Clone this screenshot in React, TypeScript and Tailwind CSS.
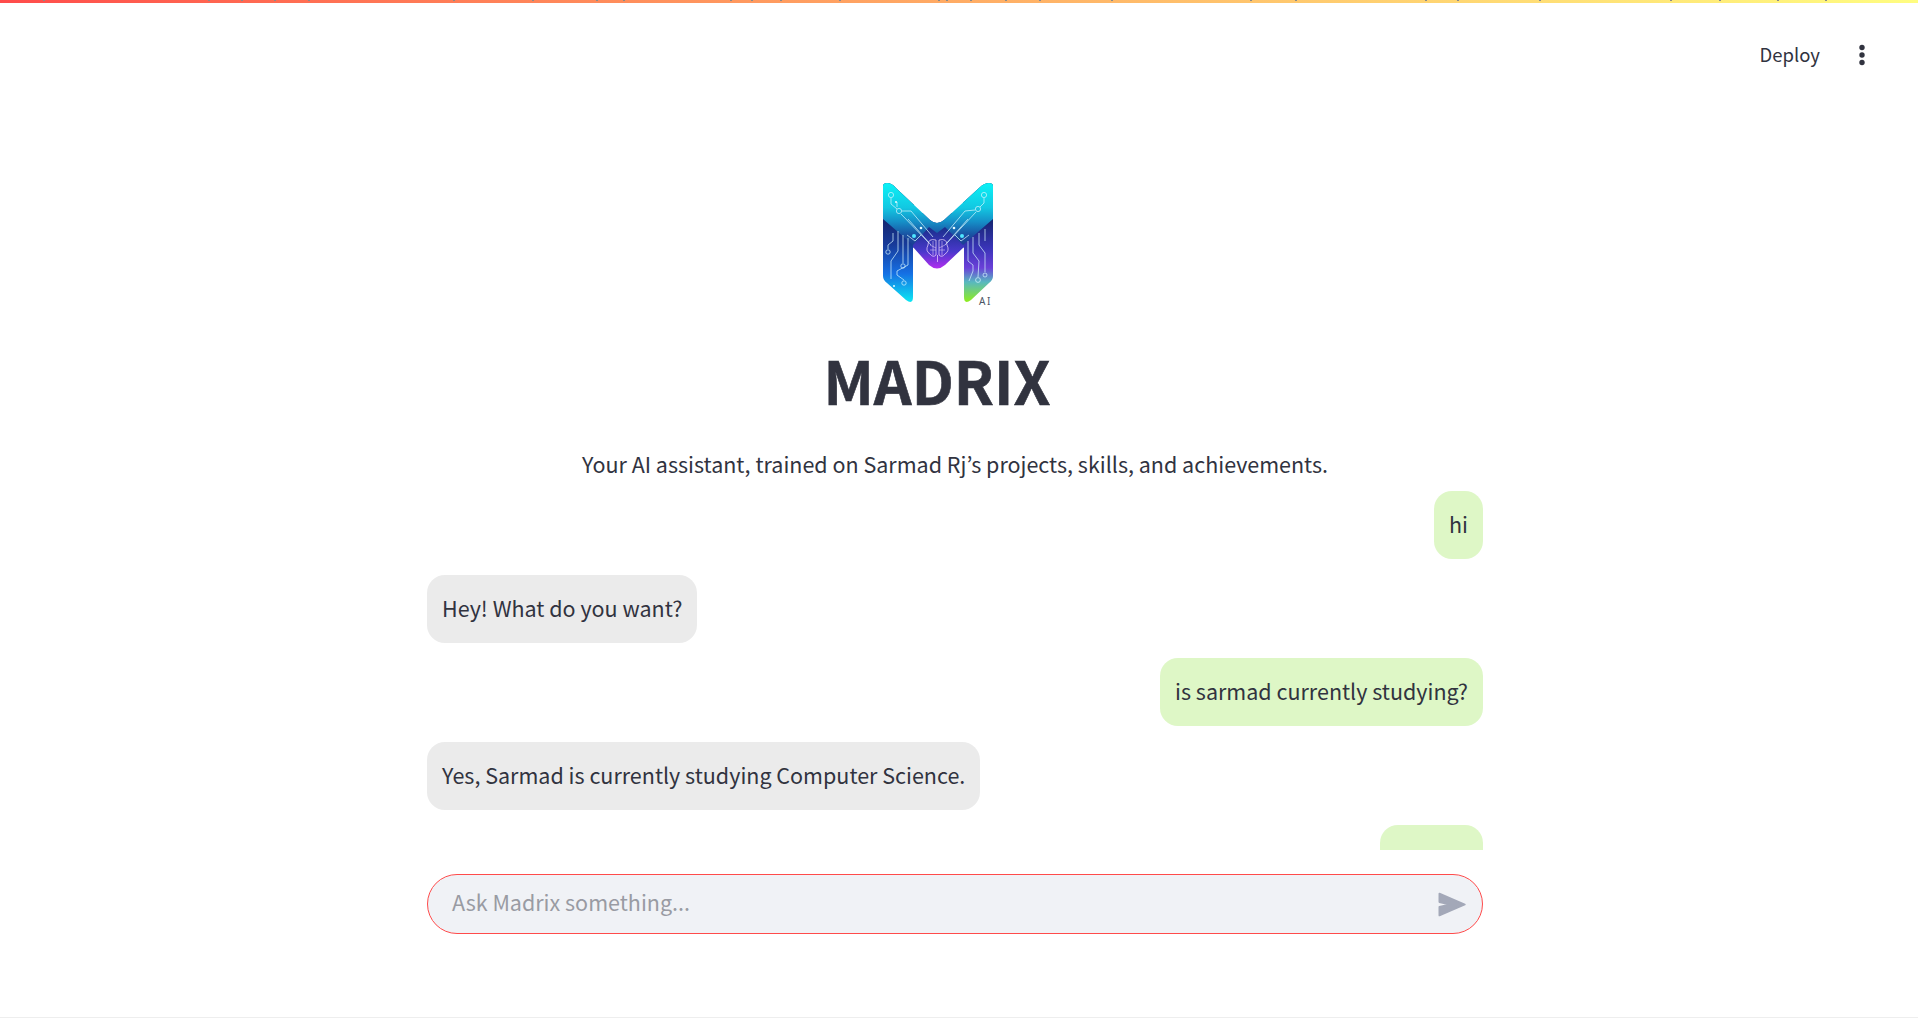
const fontStack = '[font-family:"Noto_Sans_CJK_JP","Noto_Sans",sans-serif]';

// small tick marks along the top row of the decoration bar
const barTicks = [43, 208, 241, 274, 308, 453, 532, 596, 623, 730, 751, 780, 839, 938, 946, 970, 1005, 1039, 1111, 1250, 1295, 1425, 1457, 1539, 1670, 1719, 1777, 1825];

const mShape =
  "M0 3 Q0 0 4 0 Q9 0 13 5 L47 37 Q54 43 61 37 L96 5 Q101 0 106 0 Q110 0 110 3 L110 93 Q110 97 106 100 L88 117 Q81 122 81 114 L81 64 L62 82 Q54 89 46 82 L30 64 L30 114 Q30 122 23 117 L4 100 Q0 97 0 93 Z";

function Logo() {
  return (
    <svg width="112" height="124" viewBox="0 0 112 124" fill="none">
      <defs>
        <clipPath id="mClip">
          <path d={mShape} />
        </clipPath>
        <linearGradient id="topBand" x1="0" y1="0" x2="0" y2="70" gradientUnits="userSpaceOnUse">
          <stop offset="0" stopColor="#0cf2f6" />
          <stop offset="0.35" stopColor="#12c8e2" />
          <stop offset="0.55" stopColor="#1590c8" />
          <stop offset="0.75" stopColor="#1a4fa0" />
          <stop offset="1" stopColor="#1c2f8a" />
        </linearGradient>
        <linearGradient id="leftLeg" x1="0" y1="36" x2="0" y2="120" gradientUnits="userSpaceOnUse">
          <stop offset="0" stopColor="#14266f" />
          <stop offset="0.3" stopColor="#173a99" />
          <stop offset="0.65" stopColor="#1570e4" />
          <stop offset="1" stopColor="#0cecf4" />
        </linearGradient>
        <linearGradient id="rightLeg" x1="0" y1="36" x2="0" y2="120" gradientUnits="userSpaceOnUse">
          <stop offset="0" stopColor="#14266f" />
          <stop offset="0.35" stopColor="#3a34b8" />
          <stop offset="0.58" stopColor="#6a3fd8" />
          <stop offset="0.75" stopColor="#58b8c0" />
          <stop offset="1" stopColor="#92f014" />
        </linearGradient>
        <linearGradient id="middle" x1="0" y1="45" x2="0" y2="88" gradientUnits="userSpaceOnUse">
          <stop offset="0" stopColor="#1a2f8c" />
          <stop offset="0.55" stopColor="#4a38cc" />
          <stop offset="1" stopColor="#c02cf4" />
        </linearGradient>
      </defs>
      <g clipPath="url(#mClip)">
        <rect x="0" y="0" width="31" height="124" fill="url(#leftLeg)" />
        <rect x="80" y="0" width="31" height="124" fill="url(#rightLeg)" />
        <rect x="30" y="30" width="51" height="60" fill="url(#middle)" />
        <path d="M0 0 L110 0 L110 36 L80 62 L62 44 L54 50 L46 44 L30 62 L0 36 Z" fill="url(#topBand)" />
      </g>
      <g stroke="#d6f6ff" strokeWidth="0.8" fill="none" opacity="0.9">
        <circle cx="8" cy="12" r="2.6" />
        <circle cx="101" cy="12" r="2.6" />
        <circle cx="16" cy="28" r="2.6" />
        <circle cx="95" cy="26" r="2.6" />
        <path d="M8 15 L8 21 L14 26" />
        <path d="M101 15 L101 20 L97 24" />
        <path d="M19 28 L28 28 L50 54" />
        <path d="M92 27 L82 28 L60 54" />
        <path d="M14 19 L14 24 M18 31 L46 60" />
        <path d="M93 29 L64 60" />
        <path d="M25 36 L48 62 M85 36 L62 62" />
        <path d="M24 52 L32 58 L38 52 M86 52 L78 58 L72 52" />
        <path d="M10 50 L10 58 L5 62 L5 66" />
        <circle cx="5" cy="69" r="2.2" />
        <path d="M15 48 L15 68 L8 78 L8 96" />
        <path d="M20 52 L20 80" />
        <circle cx="20" cy="83" r="2.2" />
        <path d="M25 55 L25 82 L14 88 L14 92 L21 97" />
        <circle cx="21" cy="100" r="2.2" />
        <path d="M102 46 L102 58" />
        <path d="M96 50 L96 62 L102 70 L102 89" />
        <circle cx="102" cy="92" r="2" />
        <path d="M90 54 L90 70 L96 78 L95 94" />
        <circle cx="95" cy="97" r="2.4" />
        <path d="M85 58 L85 78 L90 82 L90 88 L86 98" />
      </g>
      <g stroke="#f3dcff" strokeWidth="0.7" fill="none">
        <path d="M53 57 Q45 55 45 62 Q42 68 47 71 Q50 75 53 72 Z" />
        <path d="M56 57 Q64 55 64 62 Q67 68 62 71 Q59 75 56 72 Z" />
        <path d="M47 62 L53 65 M47 67 L53 67 M62 62 L56 65 M62 67 L56 67 M50 58 L50 72 M59 58 L59 72" strokeWidth="0.5" />
        <path d="M54.5 72 L54.5 79" />
      </g>
      <circle cx="31" cy="53" r="2" fill="#4fe6ff" />
      <circle cx="79" cy="53" r="2" fill="#4fe6ff" />
      <circle cx="38" cy="45" r="1.3" fill="#e6fbff" />
      <circle cx="71" cy="45" r="1.3" fill="#e6fbff" />
      <circle cx="13" cy="19" r="1" fill="#e6fbff" />
      <circle cx="11" cy="103" r="1" fill="#e6fbff" />
      <text x="96" y="122" fontSize="10" letterSpacing="1.5" fill="#4b5563" className="font-sans">AI</text>
    </svg>
  );
}

function SendIcon() {
  return (
    <svg width="29" height="29" viewBox="0 0 24 24" fill="#a3a8b8" stroke="#a3a8b8" strokeWidth="1.5" strokeLinejoin="round">
      <path d="M2.01 21L23 12 2.01 3 2 10l9 2-9 2z" />
    </svg>
  );
}

function UserBubble({ text }: { text: string }) {
  return (
    <div className="flex justify-end shrink-0">
      <div className="bg-[#def7c6] rounded-[18px] px-[15px] pt-[18px] pb-[20px] text-[21.5px] leading-[30px] text-[#31333f]">
        {text}
      </div>
    </div>
  );
}

function BotBubble({ text }: { text: string }) {
  return (
    <div className="flex justify-start shrink-0">
      <div className="bg-[#ebebeb] rounded-[18px] px-[15px] pt-[18px] pb-[20px] text-[21.5px] leading-[30px] text-[#31333f]">
        {text}
      </div>
    </div>
  );
}

export default function App() {
  return (
    <div className={`h-[1018px] w-full overflow-hidden bg-white flex flex-col border-b border-[#eeeeee] ${fontStack}`}>
      <div className="relative h-[3px] shrink-0 bg-gradient-to-r from-[#ff4b4b] to-[#fffd80]">
        {barTicks.map((x) => (
          <div key={x} className="absolute top-0 h-px w-[2px] bg-[#8a8a8a]" style={{ left: x }} />
        ))}
      </div>
      <div className="flex justify-end items-center h-[52px] mt-[26px] pr-[52px] shrink-0 text-[#31333f]">
        <span className="text-[18.5px] leading-[28px] mr-[38px] -translate-y-px">Deploy</span>
        <svg width="8" height="22" viewBox="0 0 8 22" fill="#31333f">
          <circle cx="4" cy="3.5" r="2.7" />
          <circle cx="4" cy="11" r="2.7" />
          <circle cx="4" cy="18.5" r="2.7" />
        </svg>
      </div>
      <div className="w-[1056px] flex flex-col flex-1 min-h-0 ml-[427px]">
        <div className="flex justify-center mt-[102px] pr-[32px]">
          <Logo />
        </div>
        <h1 className="text-center text-[59px] leading-[70px] font-bold text-[#31333f] [-webkit-text-stroke:0.6px_#31333f] mt-[38px] pr-[36px]">
          MADRIX
        </h1>
        <p className="text-center text-[21.5px] leading-[30px] text-[#31333f] mt-[34px]">
          Your AI assistant, trained on Sarmad Rj’s projects, skills, and achievements.
        </p>
        <div className="h-[359px] mt-[12px] overflow-hidden flex flex-col gap-[15.5px]">
          <UserBubble text="hi" />
          <BotBubble text="Hey! What do you want?" />
          <UserBubble text="is sarmad currently studying?" />
          <BotBubble text="Yes, Sarmad is currently studying Computer Science." />
          <div className="flex justify-end shrink-0">
            <div className="bg-[#def7c6] rounded-[18px] w-[103px] h-[68px]" />
          </div>
        </div>
        <div className="mt-[24px] h-[60px] rounded-[30px] border border-[#ff4b4b] bg-[#f0f2f6] flex items-center pl-[24px] pr-[16px]">
          <span className="flex-1 text-[21.5px] leading-[32px] text-[#999ba3] -translate-y-[2px]">Ask Madrix something...</span>
          <SendIcon />
        </div>
      </div>
    </div>
  );
}
